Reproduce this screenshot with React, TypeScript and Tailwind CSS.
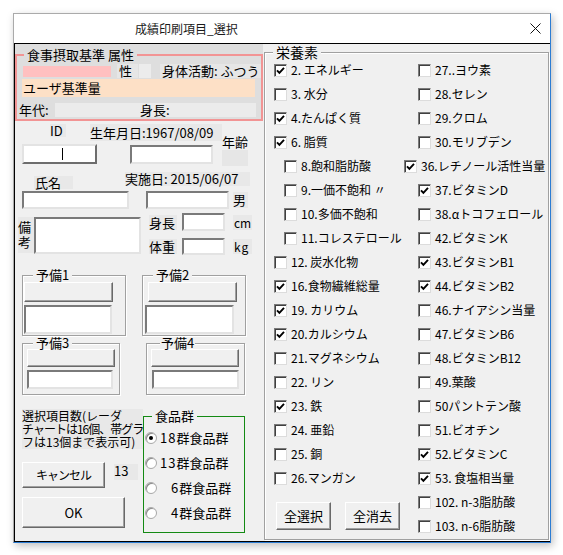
import React from "react";

const SUNKEN =
  "bg-white border-2 border-t-[#7a7a7a] border-l-[#7a7a7a] border-b-[#e3e3e3] border-r-[#e3e3e3]";
const RAISED_WHITE =
  "bg-white border-2 border-t-[#e3e3e3] border-l-[#e3e3e3] border-b-[#6d6d6d] border-r-[#6d6d6d]";
const BUTTON =
  "bg-[#f0f0f0] border border-t-white border-l-white border-b-[#696969] border-r-[#696969] shadow-[inset_-1px_-1px_0_#a0a0a0] flex items-center justify-center text-black";
const ETCHED =
  "border border-[#a0a0a0] shadow-[inset_1px_1px_0_#ffffff,1px_1px_0_#ffffff]";
const LBL = "bg-[#e8e8e8]";

function Check({ checked }: { checked: boolean }) {
  return (
    <span className="w-[13px] h-[13px] shrink-0 bg-white border border-t-[#7a7a7a] border-l-[#7a7a7a] border-b-[#dcdcdc] border-r-[#dcdcdc] shadow-[inset_1px_1px_0_#404040] flex items-center justify-center">
      {checked && (
        <svg width="9" height="9" viewBox="0 0 9 9">
          <path d="M1 4.3 L3.4 6.8 L8 1.8" fill="none" stroke="#000" strokeWidth="1.9" />
        </svg>
      )}
    </span>
  );
}

function Radio({ on }: { on: boolean }) {
  return (
    <span className="w-[12px] h-[12px] shrink-0 rounded-full bg-white border border-[#a8a8a8] shadow-[inset_1px_1px_0_#8a8a8a] flex items-center justify-center">
      {on && <span className="w-[4px] h-[4px] rounded-full bg-black" />}
    </span>
  );
}

type Nut = { t: string; c: boolean; cls?: string };

const col1: Nut[] = [
  { t: "2. エネルギー", c: true },
  { t: "3. 水分", c: false },
  { t: "4.たんぱく質", c: true },
  { t: "6. 脂質", c: true },
  { t: "8.飽和脂肪酸", c: false, cls: "ml-[10px]" },
  { t: "9.一価不飽和 〃", c: false, cls: "ml-[10px]" },
  { t: "10.多価不飽和", c: false, cls: "ml-[10px]" },
  { t: "11.コレステロール", c: false, cls: "ml-[10px]" },
  { t: "12. 炭水化物", c: false },
  { t: "16.食物繊維総量", c: true },
  { t: "19. カリウム", c: true },
  { t: "20.カルシウム", c: true },
  { t: "21.マグネシウム", c: false },
  { t: "22. リン", c: false },
  { t: "23. 鉄", c: true },
  { t: "24. 亜鉛", c: false },
  { t: "25. 銅", c: false },
  { t: "26.マンガン", c: false },
];

const col2: Nut[] = [
  { t: "27..ヨウ素", c: false },
  { t: "28.セレン", c: false },
  { t: "29.クロム", c: false },
  { t: "30.モリブデン", c: false },
  { t: "36.レチノール活性当量", c: true, cls: "ml-[-14px]" },
  { t: "37.ビタミンD", c: true },
  { t: "38.αトコフェロール", c: false },
  { t: "42.ビタミンK", c: false },
  { t: "43.ビタミンB1", c: true },
  { t: "44.ビタミンB2", c: true },
  { t: "46.ナイアシン当量", c: false },
  { t: "47.ビタミンB6", c: false },
  { t: "48.ビタミンB12", c: false },
  { t: "49.葉酸", c: false },
  { t: "50パントテン酸", c: false },
  { t: "51.ビオチン", c: false },
  { t: "52.ビタミンC", c: true },
  { t: "53. 食塩相当量", c: true },
  { t: "102. n-3脂肪酸", c: false },
  { t: "103. n-6脂肪酸", c: false },
];

function NutRow({ n }: { n: Nut }) {
  return (
    <div className="h-[24px] flex items-center whitespace-nowrap">
      <div className={"flex items-center " + (n.cls ?? "")}>
        <Check checked={n.c} />
        <span className="ml-[4px] text-[12px] leading-[14px]">{n.t}</span>
      </div>
    </div>
  );
}

export default function App() {
  const radios: { d: string; on: boolean; cls: string }[] = [
    { d: "18", on: true, cls: "" },
    { d: "13", on: false, cls: "" },
    { d: "6", on: false, cls: "pl-[11px]" },
    { d: "4", on: false, cls: "pl-[11px]" },
  ];
  return (
    <div className="w-[563px] h-[555px] bg-white pt-[13px] pl-[13px] font-['Noto_Sans_CJK_JP','Noto_Sans_CJK_SC',sans-serif] text-black">
      <div className="w-[538px] h-[530px] flex flex-col border border-[#aaaaaa] border-r-[#2b7cd3] border-b-[#2b7cd3] shadow-[2px_3px_8px_rgba(0,0,0,0.25)]">
        {/* title bar */}
        <div className="h-[29px] shrink-0 bg-white flex items-center">
          <span className="ml-[121px] text-[12px] leading-[16px] text-[#1a1a1a]">成績印刷項目_選択</span>
          <svg className="ml-auto mr-[9px]" width="11" height="11" viewBox="0 0 11 11">
            <path d="M0.5 0.5 L10.5 10.5 M10.5 0.5 L0.5 10.5" stroke="#111" strokeWidth="1" />
          </svg>
        </div>

        {/* client */}
        <div className="flex-1 bg-[#f0f0f0] border-t border-l border-b border-black flex">
          {/* left column */}
          <div className="w-[248px] shrink-0 flex flex-col">
            {/* block A */}
            <div className="h-[77px] bg-[#dedede] pt-[4px]">
              <fieldset className="w-[245px] h-[73px] border-2 border-[#f29494]">
                <legend className="ml-[7px] px-[3px] text-[13px] leading-[14px]">食事摂取基準 属性</legend>
                <div className="mt-[2px] h-[14px] flex items-center text-[13px] leading-[14px]">
                  <span className="ml-[6px] w-[88px] h-[11px] bg-[#ffc0c0]" />
                  <span className="ml-[6px] w-[21px] h-[14px] pl-[2px] bg-[#e6e6e6]">性</span>
                  <span className="ml-[1px] w-[12px] h-[14px] bg-[#ececec]" />
                  <span className="ml-[9px] h-[14px] pl-[2px] pr-[1px] bg-[#e6e6e6] whitespace-nowrap">身体活動: ふつう</span>
                </div>
                <div className="mt-[1px] h-[18px] flex">
                  <span className="ml-[5px] w-[233px] h-[18px] bg-[#fde0c6] pl-[1px] text-[13px] leading-[18px]">ユーザ基準量</span>
                </div>
                <div className="mt-[6px] h-[14px] flex items-center text-[13px] leading-[14px]">
                  <span className="ml-[2px] w-[36px]">年代:</span>
                  <span className="w-[201px] h-[14px] bg-[#ebebeb] pl-[85px]">身長:</span>
                </div>
              </fieldset>
            </div>

            {/* block B */}
            <div className="flex items-start">
              <div className="w-[207px] flex flex-col">
                <div className="mt-[3px] h-[17px] flex items-start text-[13px]">
                  <span className={"ml-[35px] w-[16px] h-[13px] leading-[13px] " + LBL}>ID</span>
                  <span className={"ml-[24px] w-[132px] h-[17px] leading-[17px] whitespace-nowrap " + LBL}>生年月日:1967/08/09</span>
                </div>
                <div className="mt-[3px] flex items-start">
                  <div className={"ml-[7px] w-[75px] h-[20px] flex items-center justify-center " + RAISED_WHITE}>
                    <span className="ml-[6px] w-[1px] h-[12px] bg-black" />
                  </div>
                  <div className={"ml-[33px] mt-[1px] w-[83px] h-[19px] " + SUNKEN} />
                </div>
              </div>
              <div className="w-[26px] flex flex-col">
                <span className="mt-[13px] text-[13px] leading-[16px] whitespace-nowrap">年齢</span>
                <span className="w-[26px] h-[16px] bg-[#e6e6e6]" />
              </div>
            </div>

            {/* block C */}
            <div className="mt-[5px] h-[18px] flex items-start text-[13px]">
              <span className={"ml-[19px] mt-[5px] w-[39px] h-[13px] leading-[13px] pl-[1px] " + LBL}>氏名</span>
              <span className={"ml-[52px] mt-[1px] w-[125px] h-[14px] leading-[14px] whitespace-nowrap " + LBL}>実施日: 2015/06/07</span>
            </div>
            <div className="mt-[2px] h-[18px] flex items-center">
              <div className={"ml-[7px] w-[107px] h-[18px] " + SUNKEN} />
              <div className={"ml-[17px] w-[83px] h-[18px] " + SUNKEN} />
              <span className={"ml-[4px] w-[15px] h-[16px] text-[13px] leading-[16px] " + LBL}>男</span>
            </div>

            {/* block D */}
            <div className="flex items-start">
              <span className={"ml-[3px] mt-[8px] w-[16px] h-[36px] pt-[2px] text-[13px] leading-[15px] " + LBL}>
                備<br />考
              </span>
              <div className={"mt-[8px] w-[107px] h-[37px] " + SUNKEN} />
              <div className="ml-[8px] flex flex-col text-[13px]">
                <div className="mt-[4px] h-[18px] flex items-center">
                  <span className={"w-[28px] h-[15px] leading-[15px] " + LBL}>身長</span>
                  <div className={"ml-[5px] w-[43px] h-[18px] " + SUNKEN} />
                  <span className={"ml-[8px] w-[19px] h-[15px] leading-[15px] text-[12px] pl-[1px] " + LBL}>cm</span>
                </div>
                <div className="mt-[7px] h-[17px] flex items-center">
                  <span className={"w-[28px] h-[15px] leading-[15px] " + LBL}>体重</span>
                  <div className={"ml-[5px] w-[43px] h-[17px] " + SUNKEN} />
                  <span className={"ml-[8px] w-[19px] h-[15px] leading-[15px] text-[12px] pl-[1px] tracking-[1px] " + LBL}>kg</span>
                </div>
              </div>
            </div>

            {/* block E */}
            <div className="mt-[13px] flex items-start">
              <fieldset className={"ml-[7px] w-[104px] h-[68px] " + ETCHED}>
                <legend className="ml-[10px] px-[3px] text-[13px] leading-[14px] bg-[#f0f0f0]">予備1</legend>
                <div className={"ml-[1px] w-[89px] h-[20px] " + BUTTON} />
                <div className={"ml-[1px] mt-[3px] w-[88px] h-[29px] " + SUNKEN} />
              </fieldset>
              <fieldset className={"ml-[16px] w-[104px] h-[68px] " + ETCHED}>
                <legend className="ml-[10px] px-[3px] text-[13px] leading-[14px] bg-[#f0f0f0]">予備2</legend>
                <div className={"ml-[5px] w-[89px] h-[20px] " + BUTTON} />
                <div className={"ml-[2px] mt-[3px] w-[89px] h-[29px] " + SUNKEN} />
              </fieldset>
            </div>
            <div className="mt-[1px] flex items-start">
              <fieldset className={"ml-[7px] w-[98px] h-[58px] " + ETCHED}>
                <legend className="ml-[10px] px-[3px] text-[13px] leading-[12px] bg-[#f0f0f0]">予備3</legend>
                <div className={"ml-[4px] w-[88px] h-[18px] " + BUTTON} />
                <div className={"ml-[4px] mt-[3px] w-[86px] h-[19px] " + SUNKEN} />
              </fieldset>
              <fieldset className={"ml-[26px] w-[99px] h-[58px] " + ETCHED}>
                <legend className="ml-[13px] px-[1px] text-[13px] leading-[12px] bg-[#f0f0f0]">予備4</legend>
                <div className={"ml-[4px] w-[88px] h-[18px] " + BUTTON} />
                <div className={"ml-[5px] mt-[3px] w-[87px] h-[19px] " + SUNKEN} />
              </fieldset>
            </div>

            {/* block F */}
            <div className="flex items-start">
              <div className="w-[128px] shrink-0 flex flex-col">
                <div className={"mt-[14px] ml-[7px] w-[121px] h-[40px] text-[12px] leading-[13px] whitespace-nowrap " + LBL}>
                  選択項目数(レーダ
                  <br />
                  <span className="tracking-[-1px]">チャートは16個、帯グラ</span>
                  <br />
                  フは13個まで表示可)
                </div>
                <div className="mt-[13px] flex items-start">
                  <div className={"ml-[7px] w-[83px] h-[26px] text-[12px] tracking-[-1px] " + BUTTON}>キャンセル</div>
                  <span className={"ml-[9px] mt-[2px] w-[24px] h-[16px] text-[13px] leading-[14px] " + LBL}>13</span>
                </div>
                <div className={"mt-[9px] ml-[7px] w-[103px] h-[31px] text-[13px] " + BUTTON}>OK</div>
              </div>
              <fieldset className="mt-[14px] w-[102px] h-[124px] border border-[#138a13]">
                <legend className="ml-[8px] px-[3px] text-[13px] leading-[14px]">食品群</legend>
                <div className="mt-[2px] flex flex-col">
                  {radios.map((r) => (
                    <div key={r.d} className="h-[25px] flex items-center">
                      <span className="ml-[1px]">
                        <Radio on={r.on} />
                      </span>
                      <span className={"ml-[3px] text-[13px] leading-[15px] whitespace-nowrap " + r.cls}>
                        <span className="tracking-[1px]">{r.d}</span>群食品群
                      </span>
                    </div>
                  ))}
                </div>
              </fieldset>
            </div>
          </div>

          {/* right column */}
          <fieldset className={"ml-[1px] mt-[2px] w-[285px] h-[494px] " + ETCHED}>
            <legend className="ml-[8px] px-[3px] text-[14px] leading-[12px] bg-[#f0f0f0]">栄養素</legend>
            <div className="flex pl-[9px]">
              <div className="w-[144px] shrink-0 flex flex-col">
                {col1.map((n) => (
                  <NutRow key={n.t} n={n} />
                ))}
                <div className="mt-[12px] h-[28px] flex">
                  <div className={"ml-[2px] w-[55px] h-[28px] text-[13px] " + BUTTON}>全選択</div>
                  <div className={"ml-[14px] w-[55px] h-[28px] text-[13px] " + BUTTON}>全消去</div>
                </div>
              </div>
              <div className="flex flex-col">
                {col2.map((n) => (
                  <NutRow key={n.t} n={n} />
                ))}
              </div>
            </div>
          </fieldset>
        </div>
      </div>
    </div>
  );
}
